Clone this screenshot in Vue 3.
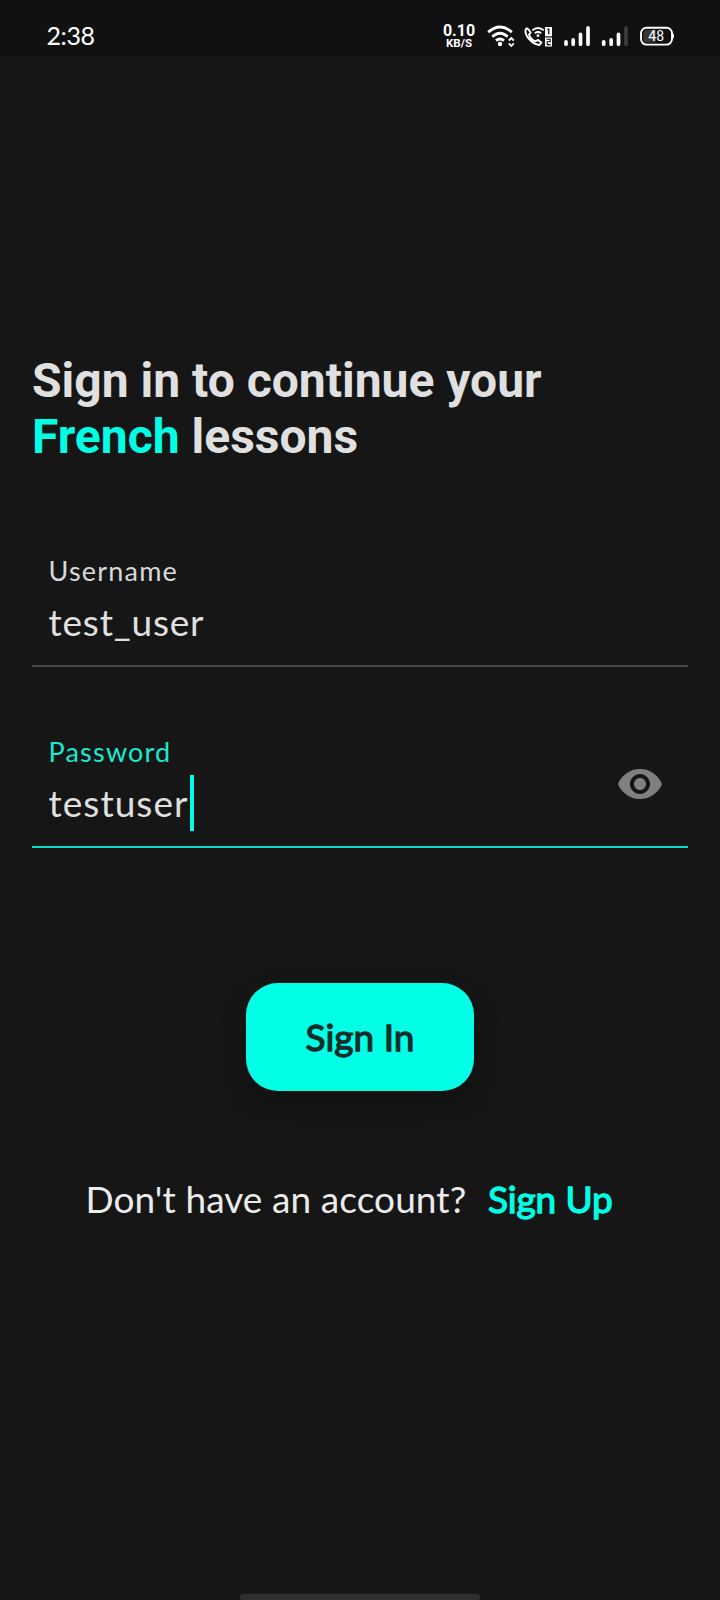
<script setup>
import { ref } from 'vue'

const username = ref('test_user')
const password = ref('testuser')
</script>

<template>
  <div class="screen">
    <header class="status">
      <span class="clock">2:38</span>
      <div class="rate"><b>0.10</b><small>KB/S</small></div>
      <svg class="glyphs" width="240" height="36" viewBox="440 18 240 36">
        <g fill="none" stroke="#fff" stroke-width="2.9">
          <path d="M488.2 32.2Q500 21.8 511.8 32.2" />
          <path d="M492.3 36.6Q500 29.8 507.7 36.6" />
          <path d="M496 40.6Q500 37.4 504 40.6" />
        </g>
        <circle cx="500" cy="44" r="2.2" fill="#fff" />
        <path d="M508.8 40.5L511.3 38L513.8 40.5M508.8 43.3L511.3 45.8L513.8 43.3" fill="none" stroke="#fff" stroke-width="1.9" />
        <path d="M528.5 29.4L526.6 28.2L525.6 29.6C524.5 35 531 44 539.3 45L541.5 42.7L538.2 40L535 41.3C532.2 40 530 37.5 529 34.6L530.6 32.6Z" fill="none" stroke="#fff" stroke-width="1.9" stroke-linejoin="round" />
        <g fill="none" stroke="#fff" stroke-width="1.8">
          <path d="M532.3 30.3Q538 25.7 543.7 30.3" />
          <path d="M534.8 33.3Q538 30.8 541.2 33.3" />
        </g>
        <circle cx="538" cy="35.7" r="1.4" fill="#fff" />
        <rect x="545" y="27" width="7" height="9.3" fill="#fff" />
        <rect x="545" y="37.5" width="7" height="9" fill="#fff" />
        <path d="M547.2 29.2H548.8V34.2" fill="none" stroke="#111" stroke-width="1.3" />
        <path d="M546.5 39.3H550.2V41.7H547.2V44.6H550.7" fill="none" stroke="#111" stroke-width="1.1" />
        <g stroke="#fff" stroke-width="3.7" stroke-linecap="round">
          <path d="M566 41.8V44.2M573.2 39.8V44.2M580.5 34.4V44.2M588 27.8V44.2" />
          <path d="M603.7 41.8V44.2M611.2 39.8V44.2M618.5 34.4V44.2" />
          <path d="M626 27.8V44.2" stroke="#3d3d3d" />
        </g>
        <path d="M671.5 32.5Q674 33 674 36Q674 39 671.5 39.5Z" fill="#fff" />
        <rect x="641" y="27.8" width="31" height="16.8" rx="5.5" fill="#111" stroke="#fff" stroke-width="1.9" />
        <path d="M647 30H656V42.5H647Q643.2 42.5 643.2 38.5V34Q643.2 30 647 30Z" fill="#363636" />
        <text x="656.2" y="41" text-anchor="middle" class="level">48</text>
      </svg>
    </header>

    <main>
      <h1>Sign in to continue your<br /><em>French</em> lessons</h1>

      <div class="field">
        <label>Username</label>
        <div class="value"><span class="user">{{ username }}</span></div>
      </div>

      <div class="field active">
        <label>Password</label>
        <div class="value"><span class="pass">{{ password }}</span><i class="caret"></i></div>
        <svg class="eye" width="48" height="48" viewBox="0 0 24 24" fill="#808080">
          <path d="M12 4.5C7 4.5 2.73 7.61 1 12c1.73 4.39 6 7.5 11 7.5s9.27-3.11 11-7.5c-1.73-4.39-6-7.5-11-7.5zM12 17c-2.76 0-5-2.24-5-5s2.24-5 5-5 5 2.24 5 5-2.24 5-5 5zm0-8c-1.66 0-3 1.34-3 3s1.34 3 3 3 3-1.34 3-3-1.34-3-3-3z" />
        </svg>
      </div>

      <button type="button"><span>Sign In</span></button>

      <p class="signup">
        <span class="question">Don't have an account?</span>
        <a>Sign Up</a>
      </p>
    </main>

    <div class="home"></div>
  </div>
</template>

<style>
body {
  background: #161616;
}
</style>

<style scoped>
.screen {
  position: relative;
  display: flex;
  flex-direction: column;
  width: 720px;
  height: 1600px;
  overflow: hidden;
  background: #161616;
  font-family: Lato, sans-serif;
}
.status {
  display: flex;
  flex: none;
  box-sizing: border-box;
  height: 56px;
  padding-left: 46.5px;
  background: #111;
  color: #fff;
}
.clock {
  width: 396.5px;
  margin-top: 18px;
  font-size: 25px;
  line-height: 34px;
  letter-spacing: -0.4px;
}
.rate {
  display: flex;
  flex-direction: column;
  align-items: center;
  width: 32px;
  margin-top: 24px;
  font-family: Roboto, sans-serif;
  white-space: nowrap;
}
.rate b {
  font-size: 16px;
  line-height: 13px;
}
.rate small {
  font-size: 11.5px;
  font-weight: 700;
  line-height: 13px;
}
.glyphs {
  flex: none;
  margin: 18px 0 0 -35px;
}
.level {
  fill: #fff;
  font: 14px Roboto, sans-serif;
}
main {
  display: flex;
  flex-direction: column;
  padding: 297px 32px 0;
}
h1 {
  margin: 0;
  color: #e0e0e0;
  font: 700 48px/56px Roboto, sans-serif;
  white-space: nowrap;
}
em {
  color: #00ffe5;
  font-style: normal;
}
.field {
  position: relative;
  box-sizing: border-box;
  height: 112px;
  margin-top: 90px;
  padding-left: 16.5px;
  border-bottom: 2px solid #444;
}
.field.active {
  height: 113px;
  margin-top: 68px;
  padding-top: 1px;
  border-color: #07dcc6;
}
label {
  display: block;
  height: 39px;
  color: #d9d9d9;
  font-size: 27px;
  line-height: 32px;
  letter-spacing: 1.2px;
}
.active label {
  color: #1de9d0;
}
.value {
  display: flex;
  color: #e0e0e0;
  font-size: 37px;
  line-height: 56px;
}
.user {
  letter-spacing: 0.8px;
}
.pass {
  letter-spacing: 1.05px;
}
.caret {
  width: 4px;
  height: 56px;
  margin-left: 1px;
  background: #00ffe5;
}
.eye {
  position: absolute;
  right: 24px;
  top: 25px;
}
button {
  align-self: center;
  width: 228px;
  height: 108px;
  margin-top: 135px;
  padding: 0;
  border: 0;
  border-radius: 32px;
  background: #00ffe5;
  box-shadow: 0 10px 24px rgba(0, 0, 0, 0.28);
  color: #112d2b;
  font: 400 37px/44px Lato, sans-serif;
  -webkit-text-stroke: 1.3px currentColor;
}
.signup {
  display: flex;
  margin: 84px 0 0 53.5px;
  font-size: 37px;
  line-height: 48px;
  white-space: nowrap;
}
.question {
  width: 402.5px;
  color: #ebebeb;
  letter-spacing: 0.08px;
}
.signup a {
  color: #00ffe5;
  letter-spacing: -0.15px;
  -webkit-text-stroke: 1.3px currentColor;
}
.home {
  position: absolute;
  left: 240px;
  bottom: 0;
  width: 240px;
  height: 6px;
  border-radius: 3px;
  background: #303030;
}
</style>
